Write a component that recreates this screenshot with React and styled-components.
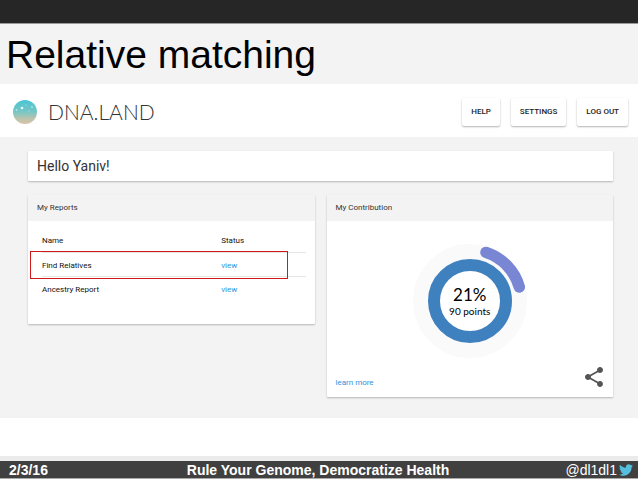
import React from 'react';
import styled, {createGlobalStyle} from 'styled-components';
import {MdShare} from 'react-icons/md';
import {FaTwitter} from 'react-icons/fa';

const GlobalStyle = createGlobalStyle`
    * {
        box-sizing: border-box;
    }

    body {
        margin: 0;
        background-color: #ffffff;
        font-family: Roboto, "Liberation Sans", sans-serif;
        color: #333333;
    }
`;

const Slide = styled.div`
    min-height: 100vh;
    display: flex;
    flex-direction: column;
`;

const TopBar = styled.div`
    height: 24px;
    background-color: #262626;
    border-bottom: 1px solid #999999;
`;

const Title = styled.h1`
    margin: 0;
    padding: 9px 6px 7px;
    background-color: #f3f3f3;
    color: #000000;
    font-family: "Liberation Sans", Arial, sans-serif;
    font-size: 39px;
    font-weight: 400;
    line-height: 44px;
`;

const Header = styled.header`
    display: flex;
    align-items: center;
    justify-content: space-between;
    padding: 14px 10px 11px 12px;
    background-color: #ffffff;
`;

const Brand = styled.a`
    display: flex;
    align-items: center;
    gap: 10px;
    color: #333333;
    font-family: Lato, sans-serif;
    font-size: 21px;
    font-weight: 300;
    line-height: 26px;
    text-decoration: none;
`;

const Nav = styled.nav`
    display: flex;
    gap: 11px;
`;

const NavButton = styled.button`
    height: 28px;
    padding: 0 9px;
    border: 0;
    border-radius: 2px;
    background-color: #ffffff;
    box-shadow: 0 1px 2px rgba(0, 0, 0, 0.3);
    color: #222222;
    font-family: inherit;
    font-size: 8px;
    font-weight: 500;
    line-height: 12px;
    cursor: pointer;
`;

const Main = styled.main`
    display: flex;
    flex-direction: column;
    gap: 14px;
    padding: 14px 25px 21px 28px;
    background-color: #f3f3f3;
`;

const Panel = styled.section`
    border-radius: 1px;
    background-color: #ffffff;
    box-shadow: 0 1px 2px rgba(0, 0, 0, 0.25);
`;

const Greeting = styled.h2`
    margin: 0;
    padding: 5px 9px;
    font-size: 14px;
    font-weight: 400;
    line-height: 20px;
`;

const Columns = styled.div`
    display: grid;
    grid-template-columns: 1fr 1fr;
    align-items: start;
    gap: 12px;
`;

const PanelTitle = styled.h3`
    margin: 0;
    padding: 7px 9px;
    background-color: #f3f3f3;
    font-size: 8px;
    font-weight: 400;
    line-height: 12px;
`;

const Reports = styled.div`
    position: relative;
    padding: 7px 9px 24px 14px;
`;

const ReportTable = styled.table`
    width: 100%;
    border-collapse: collapse;
    table-layout: fixed;
    color: #111111;
    font-size: 8px;
    line-height: 12px;

    th, td {
        height: 24px;
        padding: 3px 0 0;
        text-align: left;
        font-weight: 400;
    }

    th:first-child {
        width: 68%;
    }

    tr:not(:last-child) td, th {
        border-bottom: 1px solid #e6e6e6;
    }
`;

const Highlight = styled.div`
    position: absolute;
    top: 30px;
    left: 2px;
    right: 27px;
    height: 28px;
    border: 1px solid #d01818;
    pointer-events: none;
`;

const Link = styled.a`
    color: #2f94dc;
    font-size: 8px;
    line-height: 12px;
    text-decoration: none;
`;

const Chart = styled.div`
    display: grid;
    place-items: center;
    padding-top: 22px;
`;

const Ring = styled.svg`
    grid-area: 1 / 1;
    width: 116px;
    height: 116px;
`;

const Score = styled.div`
    grid-area: 1 / 1;
    color: #000000;
    font-family: Lato, sans-serif;
    text-align: center;
`;

const Percent = styled.div`
    font-size: 17px;
    line-height: 20px;
`;

const Points = styled.div`
    font-size: 10px;
    line-height: 12px;
`;

const PanelFooter = styled.div`
    display: flex;
    align-items: flex-end;
    justify-content: space-between;
    padding: 6px 7px 8px 9px;
`;

const ShareButton = styled.button`
    display: flex;
    padding: 0;
    border: 0;
    background: none;
    color: #555555;
    font-size: 24px;
    cursor: pointer;
`;

const Footer = styled.footer`
    display: grid;
    grid-template-columns: 30fr auto 31fr;
    align-items: center;
    margin-top: auto;
    padding: 1px 5px 0 9px;
    border-top: 5px solid #ebebeb;
    border-bottom: 1px solid #aaaaaa;
    background-color: #404040;
    color: #ffffff;
    font-family: "Liberation Sans", Arial, sans-serif;
    font-size: 14px;
    font-weight: 700;
    line-height: 16px;
`;

const Handle = styled.a`
    display: flex;
    align-items: center;
    justify-content: flex-end;
    gap: 2px;
    color: #ffffff;
    font-weight: 400;
    text-decoration: none;

    svg {
        color: #55bfe0;
    }
`;

const reports = ['Find Relatives', 'Ancestry Report'];

const Globe = () => (
    <svg width="26" height="26" viewBox="0 0 26 26" aria-hidden="true">
        <defs>
            <linearGradient id="sky" x1="0" y1="0" x2="0" y2="1">
                <stop offset="0" stopColor="#48c5d4"/>
                <stop offset="0.5" stopColor="#79c6c5"/>
                <stop offset="0.75" stopColor="#b5c4b0"/>
                <stop offset="1" stopColor="#d9c3a5"/>
            </linearGradient>
        </defs>
        <circle cx="13" cy="13" r="12" fill="url(#sky)"/>
        <circle cx="10" cy="9" r="1.3" fill="#e8fafa"/>
        <circle cx="4.5" cy="11" r="0.8" fill="#d5f3f3"/>
        <circle cx="20" cy="8" r="0.8" fill="#d5f3f3"/>
        <circle cx="14" cy="6" r="0.5" fill="#bdebec"/>
        <circle cx="17" cy="12" r="0.5" fill="#bdebec"/>
    </svg>
);

const Contribution = () => (
    <Chart>
        <Ring viewBox="0 0 116 116" aria-hidden="true">
            <circle cx="58" cy="58" r="57" fill="#fafafa"/>
            <circle cx="58" cy="58" r="36" fill="#ffffff" stroke="#3f80bf" strokeWidth="12"/>
            <path d="M74 9.4A51.2 51.2 0 0 1 107.3 44" fill="none" stroke="#7986d3" strokeWidth="11.5" strokeLinecap="round"/>
        </Ring>
        <Score>
            <Percent>21%</Percent>
            <Points>90 points</Points>
        </Score>
    </Chart>
);

const App = () => {
    return (
        <Slide>
            <GlobalStyle/>
            <TopBar/>
            <Title>Relative matching</Title>
            <Header>
                <Brand href="#"><Globe/>DNA.LAND</Brand>
                <Nav>
                    <NavButton type="button">HELP</NavButton>
                    <NavButton type="button">SETTINGS</NavButton>
                    <NavButton type="button">LOG OUT</NavButton>
                </Nav>
            </Header>
            <Main>
                <Panel>
                    <Greeting>Hello Yaniv!</Greeting>
                </Panel>
                <Columns>
                    <Panel>
                        <PanelTitle>My Reports</PanelTitle>
                        <Reports>
                            <ReportTable>
                                <thead>
                                    <tr>
                                        <th scope="col">Name</th>
                                        <th scope="col">Status</th>
                                    </tr>
                                </thead>
                                <tbody>
                                    {reports.map(name => (
                                        <tr key={name}>
                                            <td>{name}</td>
                                            <td><Link href="#">view</Link></td>
                                        </tr>
                                    ))}
                                </tbody>
                            </ReportTable>
                            <Highlight/>
                        </Reports>
                    </Panel>
                    <Panel>
                        <PanelTitle>My Contribution</PanelTitle>
                        <Contribution/>
                        <PanelFooter>
                            <Link href="#">learn more</Link>
                            <ShareButton type="button" aria-label="Share"><MdShare/></ShareButton>
                        </PanelFooter>
                    </Panel>
                </Columns>
            </Main>
            <Footer>
                <span>2/3/16</span>
                <span>Rule Your Genome, Democratize Health</span>
                <Handle href="#">@dl1dl1<FaTwitter/></Handle>
            </Footer>
        </Slide>
    );
}

export default App;
